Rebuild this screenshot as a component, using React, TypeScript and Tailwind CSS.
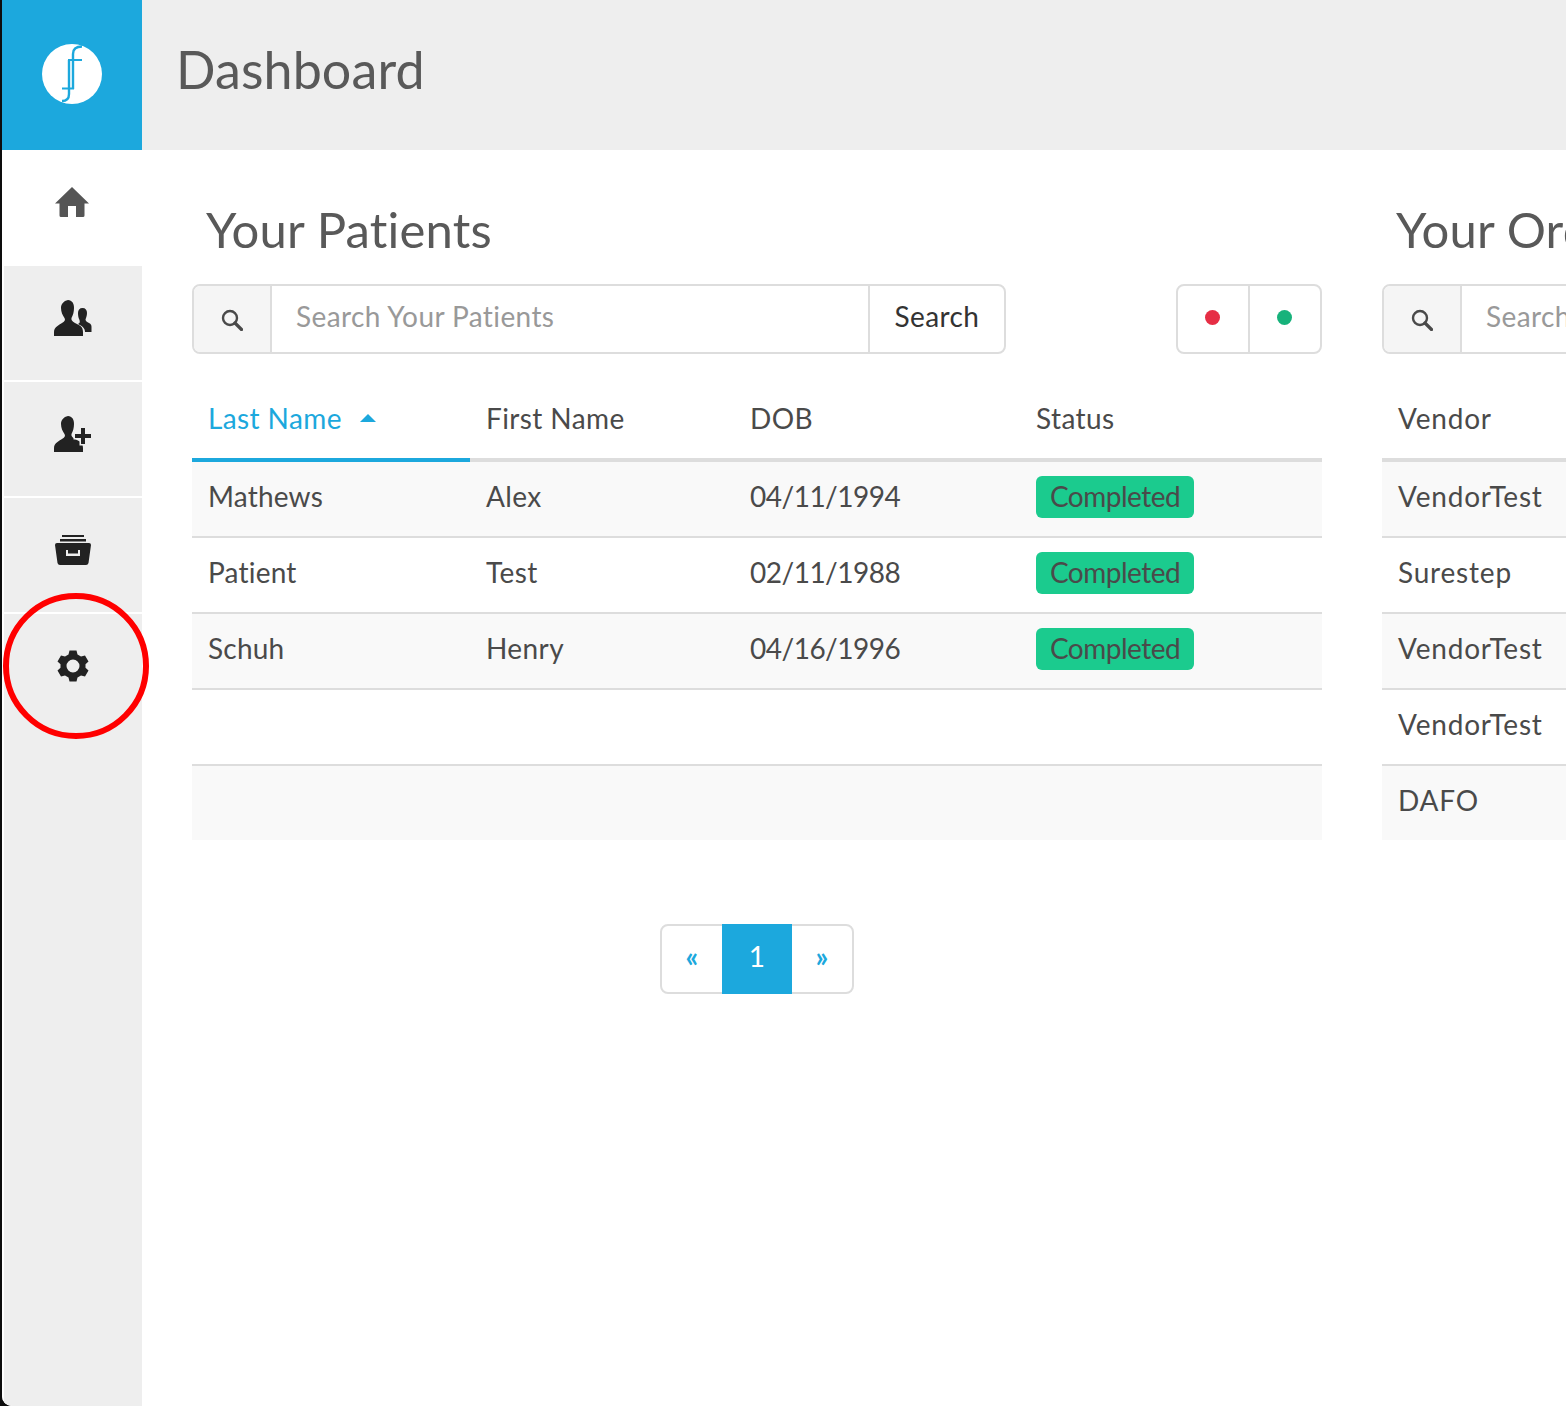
import React from 'react';

const patients = [
  { last: 'Mathews', first: 'Alex', dob: '04/11/1994' },
  { last: 'Patient', first: 'Test', dob: '02/11/1988' },
  { last: 'Schuh', first: 'Henry', dob: '04/16/1996' },
  null,
  null,
];

const vendors = ['VendorTest', 'Surestep', 'VendorTest', 'VendorTest', 'DAFO'];

function Logo() {
  return (
    <svg width="60" height="60" viewBox="0 0 60 60">
      <circle cx="30" cy="30" r="30" fill="#fff" />
      <g fill="none" stroke="#1ca8dd" strokeWidth="2.400">
        <path d="M40 2.500C34 2.500 31 5 31 10V45" />
        <path d="M27 16V50C27 54 25 57 20 57" />
        <path d="M26 16H40" strokeWidth="2" />
        <path d="M20 44.500H32" strokeWidth="2" />
      </g>
    </svg>
  );
}

function HomeIcon() {
  return (
    <svg width="34" height="30" viewBox="0 0 34 30" fill="#555">
      <path d="M17 0 34 16.500H29.500V28.500Q29.500 30 28 30H21V19H13V30H6Q4.500 30 4.500 28.500V16.500H0Z" />
    </svg>
  );
}

function UsersIcon() {
  return (
    <svg width="38" height="37" viewBox="0 0 38 37" fill="#222">
      <path d="M14 0C18 .5 20 3 20 8 20 12 19 15 17.500 18 17 20 18 21 21 23 25 25 29 26 29 32V36H0V32C0 27 5 25 8 23 11 21 11.500 20 10.500 18 8.500 15 7 12 7 8 7 4 9.500 1 14 0Z" />
      <path d="M28.500 8C31.500 8 33 10 33 13 33 16 32 18 31.500 19.500 31.500 21 33 22 35 23 37 24 37.500 25 37.500 27V32H31C31 28 28 26 24 24 26 23 26 22 25.500 20 24.500 18 24 16 24 13 24 10 25.500 8 28.500 8Z" />
    </svg>
  );
}

function UserAddIcon() {
  return (
    <svg width="38" height="37" viewBox="0 0 38 37" fill="#222">
      <path d="M14 0C18 .5 20 3 20 8 20 12 19 15 17.500 18 17 20 18 21 21 23 25 25 29 26 29 32V36H0V32C0 27 5 25 8 23 11 21 11.500 20 10.500 18 8.500 15 7 12 7 8 7 4 9.500 1 14 0Z" />
      <path
        d="M27 12H31V18H37V22H31V28H27V22H21V18H27Z"
        stroke="#eee"
        strokeWidth="3"
        style={{ paintOrder: 'stroke' }}
      />
    </svg>
  );
}

function ArchiveIcon() {
  return (
    <svg width="36" height="31" viewBox="0 0 36 31">
      <path d="M7 0H29V2H7ZM5 4H31V6.500H5Z" fill="#222" />
      <path
        fillRule="evenodd"
        fill="#222"
        d="M2 8H34Q36 8 36 10L33.500 28Q33 30 31 30H5Q3 30 2.500 28L0 10Q0 8 2 8ZM11 15V21H25V15H23V18.500H13V15Z"
      />
    </svg>
  );
}

function GearIcon() {
  return (
    <svg width="32" height="32" viewBox="0 0 32 32" fill="#222">
      <path
        fillRule="evenodd"
        d="M12.500 .5H19.500L20.500 4.500 24 6.500 28 5.500 31.500 11.500 28.500 14.300V17.700L31.500 20.500 28 26.500 24 25.500 20.500 27.500 19.500 31.500H12.500L11.500 27.500 8 25.500 4 26.500 .5 20.500 3.500 17.700V14.300L.5 11.500 4 5.500 8 6.500 11.500 4.500ZM16 9.500A6.500 6.500 0 1 0 16 22.500 6.500 6.500 0 1 0 16 9.500Z"
      />
    </svg>
  );
}

function SearchIcon() {
  return (
    <svg width="22" height="22" viewBox="0 0 22 22" fill="none" stroke="#4a4a4a" className="mt-[2px]">
      <circle cx="9" cy="9" r="7" strokeWidth="2.400" />
      <path d="M14 14 20.500 20.500" strokeWidth="3.200" strokeLinecap="round" />
    </svg>
  );
}

function SearchBar({ placeholder, button }: { placeholder: string; button?: boolean }) {
  return (
    <div className="flex h-[70px] flex-1 overflow-hidden rounded-lg border-2 border-[#ddd] bg-white">
      <div className="flex w-[78px] shrink-0 items-center justify-center border-r-2 border-[#ddd] bg-[#f5f5f5]">
        <SearchIcon />
      </div>
      <input
        placeholder={placeholder}
        className="min-w-0 flex-1 bg-white px-6 pb-[6px] text-[28px] text-[#4a4a4a] outline-none placeholder:text-[#999]"
      />
      {button && (
        <div className="flex w-[136px] shrink-0 items-center justify-center border-l-2 border-[#ddd] pb-[6px] text-[#333]">
          Search
        </div>
      )}
    </div>
  );
}

function Title({ children }: { children: React.ReactNode }) {
  return (
    <h2 className="h-[134px] pt-[46px] pl-[14px] text-[49px] leading-[66px] tracking-[0.2px] text-[#595959]">
      {children}
    </h2>
  );
}

function Row({ index, children }: { index: number; children: React.ReactNode }) {
  return (
    <div
      className={`grid grid-cols-[278px_264px_286px_1fr] items-center border-[#ddd] pb-[6px] text-[#4a4a4a] ${
        index % 2 === 0 ? 'bg-[#f9f9f9]' : 'bg-white'
      } ${index < 4 ? 'h-[76px] border-b-2' : 'h-[74px]'}`}
    >
      {children}
    </div>
  );
}

export default function App() {
  return (
    <div
      className="flex h-[1406px] w-[1566px] overflow-hidden bg-[#0d0d0d] pl-[2px] text-[28px] tracking-[0.4px]"
      style={{ fontFamily: 'Lato, "Open Sans", sans-serif' }}
    >
      <div className="relative flex w-full overflow-hidden rounded-bl-[10px] bg-white">
        <aside className="flex w-[140px] shrink-0 flex-col gap-[2px] bg-white">
          <div className="flex h-[150px] shrink-0 items-center justify-center bg-[#1ca8dd] pb-[2px]">
            <Logo />
          </div>
          <div className="-mt-[2px] flex h-[116px] shrink-0 items-start justify-center pt-[37px]">
            <HomeIcon />
          </div>
          <div className="-mt-[2px] ml-[2px] flex h-[114px] shrink-0 justify-center bg-[#eee] pt-[34px]">
            <UsersIcon />
          </div>
          <div className="ml-[2px] flex h-[114px] shrink-0 justify-center bg-[#eee] pt-[34px]">
            <UserAddIcon />
          </div>
          <div className="ml-[2px] flex h-[114px] shrink-0 justify-center bg-[#eee] pt-[37px]">
            <ArchiveIcon />
          </div>
          <div className="ml-[2px] flex flex-1 justify-center bg-[#eee] pt-[36px]">
            <GearIcon />
          </div>
        </aside>

        <div className="min-w-0 flex-1">
          <header className="flex h-[150px] items-center bg-[#eee] pb-[12px] pl-[34px] text-[52px] tracking-[0.1px] text-[#595959]">
            Dashboard
          </header>

          <main className="flex gap-[60px] pl-[50px]">
            <section className="w-[1130px] shrink-0">
              <Title>Your Patients</Title>
              <div className="flex gap-[170px]">
                <SearchBar placeholder="Search Your Patients" button />
                <div className="flex h-[70px] w-[146px] shrink-0 rounded-lg border-2 border-[#ddd]">
                  <div className="flex flex-1 items-center justify-center border-r-2 border-[#ddd] pr-[2px] pb-[4px]">
                    <span className="h-[15px] w-[15px] rounded-full bg-[#e62e45]" />
                  </div>
                  <div className="flex flex-1 items-center justify-center pr-[2px] pb-[4px]">
                    <span className="h-[15px] w-[15px] rounded-full bg-[#17b27b]" />
                  </div>
                </div>
              </div>

              <div className="mt-[26px] grid h-[82px] grid-cols-[278px_264px_286px_1fr] border-b-4 border-[#ddd] text-[#4a4a4a]">
                <div className="-mb-[4px] flex items-center gap-[18px] border-b-4 border-[#1ca8dd] pb-[2px] pl-4 text-[#1ca8dd]">
                  Last Name
                  <span className="h-0 w-0 border-x-[8px] border-b-[8px] border-x-transparent border-b-[#1ca8dd]" />
                </div>
                <div className="flex items-center pb-[2px] pl-4">First Name</div>
                <div className="flex items-center pb-[2px] pl-4">DOB</div>
                <div className="flex items-center pb-[2px] pl-4">Status</div>
              </div>

              {patients.map((p, i) => (
                <Row key={i} index={i}>
                  {p && (
                    <>
                      <div className="pl-4 tracking-[0.2px]">{p.last}</div>
                      <div className="pl-4">{p.first}</div>
                      <div className="pl-4 tracking-[-0.5px]">{p.dob}</div>
                      <div className="pl-4">
                        <span className="mt-[2px] flex h-[42px] w-[158px] items-center justify-center rounded-md bg-[#1bcb8e] pb-[2px] tracking-[-0.5px]">
                          Completed
                        </span>
                      </div>
                    </>
                  )}
                </Row>
              ))}

              <div className="mt-[84px] flex justify-center">
                <div className="flex h-[70px] w-[194px] items-stretch rounded-lg border-2 border-[#ddd] font-bold text-[#1ca8dd]">
                  <div className="flex w-[60px] items-center justify-center pb-[6px]">«</div>
                  <div className="-my-[2px] flex w-[70px] items-center justify-center bg-[#1ca8dd] pb-[6px] font-normal text-white">
                    1
                  </div>
                  <div className="flex flex-1 items-center justify-center pb-[6px]">»</div>
                </div>
              </div>
            </section>

            <section className="w-[1130px] shrink-0">
              <Title>Your Orders</Title>
              <div className="flex">
                <SearchBar placeholder="Search Your Orders" button />
              </div>
              <div className="mt-[26px] flex h-[82px] items-center border-b-4 border-[#ddd] pb-[2px] pl-4 tracking-[0.8px] text-[#4a4a4a]">
                Vendor
              </div>
              {vendors.map((v, i) => (
                <Row key={i} index={i}>
                  <div className="pl-4 tracking-[0.8px] whitespace-nowrap">{v}</div>
                </Row>
              ))}
            </section>
          </main>
        </div>

        {/* highlight drawn on top of the screenshot */}
        <div className="absolute top-[593px] left-[1px] h-[146px] w-[146px] rounded-full border-[6px] border-[#f00]" />
      </div>
    </div>
  );
}
